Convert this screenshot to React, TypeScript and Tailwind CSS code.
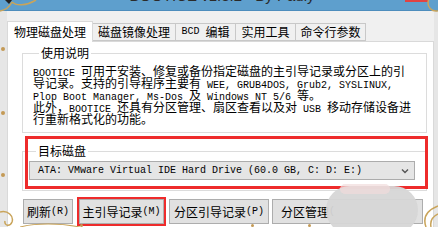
import React from "react";

const mono = "font-['Liberation_Mono','Courier_New',monospace] text-[10px] leading-[12px]";
const cjk = "font-['Noto_Sans_CJK_SC','Noto_Sans',sans-serif]";

function L({ children }: { children: React.ReactNode }) {
  return <span className={mono}>{children}</span>;
}

function Line({ children }: { children: React.ReactNode }) {
  return <div className="h-[12px] whitespace-nowrap leading-[12px]">{children}</div>;
}

function Btn({ children, w }: { children: React.ReactNode; w: string }) {
  return (
    <div className={`flex h-[25px] ${w} items-center justify-center border border-[#adadad] bg-[#e1e1e1] text-[12px] leading-[14px] text-black`}>
      {children}
    </div>
  );
}

const tab = "flex h-[18px] items-center justify-center border border-l-0 border-[#c8c8c8] bg-[#f0f0f0] text-[12px] leading-[14px] text-black";

export default function App() {
  return (
    <div className={`relative flex h-[227px] w-[438px] flex-col overflow-hidden bg-[#ececec] ${cjk}`}>
      {/* title bar */}
      <div className="relative flex h-[11px] shrink-0 justify-center overflow-hidden border-b border-[#4d8dbd] bg-[#5e9fcd]">
        <span className="-mt-[12px] ml-[6px] font-['Liberation_Sans',Arial,sans-serif] text-[15px] leading-[15px] text-[#2a2a2a]">
          BOOTICE v1.3.2 - By Pauly
        </span>
        <div className="absolute left-[405px] top-0 h-[2px] w-[23px] bg-[#e04343]" />
      </div>

      <div className="flex flex-1">
        <div className="w-[7px] shrink-0 bg-[#e6e6e6]" />
        <div className="flex flex-1 flex-col bg-[#f0f0f0] pt-[9px]">
          {/* tabs */}
          <div className="relative z-10 flex h-[21px] items-end">
            <div className="-mb-px flex h-[21px] w-[86px] items-center justify-center border border-b-0 border-[#d9d9d9] bg-white text-[12px] leading-[14px] text-black">
              物理磁盘处理
            </div>
            <div className={`${tab} w-[83px]`}>磁盘镜像处理</div>
            <div className={`${tab} w-[60px]`}>
              <L>BCD&nbsp;</L>编辑
            </div>
            <div className={`${tab} w-[60px]`}>实用工具</div>
            <div className={`${tab} w-[70px]`}>命令行参数</div>
          </div>

          {/* panel */}
          <div className="flex h-[200px] flex-col border border-[#d9d9d9] bg-white pl-[14px] pr-[6px]">
            <fieldset className="mt-[4px] border border-[#dcdcdc] pb-[7px] pl-[10px] pt-[5px]">
              <legend className="ml-[6px] px-[2px] text-[12px] leading-[14px] text-black">使用说明</legend>
              <div className="text-[12px] leading-[12px] text-black">
                <Line><L>BOOTICE </L>可用于安装、修复或备份指定磁盘的主引导记录或分区上的引</Line>
                <Line>导记录。支持的引导程序主要有<L> WEE, GRUB4DOS, Grub2, SYSLINUX,</L></Line>
                <Line><L>Plop Boot Manager, Ms-Dos </L>及<L> Windows NT 5/6 </L>等。</Line>
                <Line>此外，<L>BOOTICE </L>还具有分区管理、扇区查看以及对<L> USB </L>移动存储设备进</Line>
                <Line>行重新格式化的功能。</Line>
              </div>
            </fieldset>

            <fieldset className="mt-[11px] border border-[#dcdcdc] pb-[10px] pl-[6px] pr-[11px] pt-[3px]">
              <legend className="ml-[7px] px-[2px] text-[12px] leading-[14px] text-black">目标磁盘</legend>
              <div className="flex h-[19px] items-center border border-[#acacac] bg-[#e5e5e5] pl-[8px] pr-[5px]">
                <span className={`${mono} flex-1 whitespace-nowrap text-black`}>ATA: VMware Virtual IDE Hard Drive (60.0 GB, C: D: E:)</span>
                <svg width="8" height="6" viewBox="0 0 8 6">
                  <path d="M1 1.5 L4 4.5 L7 1.5" fill="none" stroke="#555" strokeWidth="1.4" />
                </svg>
              </div>
            </fieldset>

            <div className="mt-[6px] flex items-center">
              <div className="ml-[1px]">
                <Btn w="w-[50px]">刷新<L>(R)</L></Btn>
              </div>
              <div className="ml-[4px] border-2 border-[#ee2b2b]">
                <Btn w="w-[85px]">主引导记录<L>(M)</L></Btn>
              </div>
              <div className="ml-[3px]">
                <Btn w="w-[100px]">分区引导记录<L>(P)</L></Btn>
              </div>
              <div className="ml-[3px]">
                <div className="flex h-[25px] w-[151px] items-center border border-[#adadad] bg-[#e1e1e1] pl-[8px] text-[12px] leading-[14px] text-black">
                  分区管理<L>(</L>
                </div>
              </div>
            </div>
          </div>
        </div>
        <div className="w-[4px] shrink-0 bg-[#e6e6e6]" />
      </div>

      {/* red annotation around target disk */}
      <div className="absolute left-[25px] top-[136px] h-[53px] w-[403px] border-[3px] border-[#ee2b2b]" />

      {/* blurred mosaic */}
      <div className="absolute left-[326px] top-[186px] h-[48px] w-[92px] rounded-full bg-[#d6d6d6] opacity-95" />
      <div className="absolute left-[340px] top-[184px] h-[10px] w-[50px] rounded-full bg-[#f1dcdc] opacity-70" />

      {/* decorations */}
      <svg className="absolute left-0 top-0" width="40" height="16" viewBox="0 0 40 16">
        <path d="M0 11 C6 10 10 6 12 2 M12 2 C16 6 26 6 36 0" fill="none" stroke="#c9a45a" strokeWidth="1.5" />
        <path d="M5 0 L12 0 L9 4 Z" fill="#222" />
      </svg>
      <svg className="absolute left-[424px] top-0" width="14" height="12" viewBox="0 0 14 12">
        <circle cx="12" cy="3" r="8" fill="none" stroke="#c9a45a" strokeWidth="1.5" />
      </svg>
      <div className="absolute left-[1px] top-[47px] h-[4px] w-[4px] rounded-full bg-[#c49a55]" />
      <div className="absolute left-[1px] top-[111px] h-[4px] w-[4px] rounded-full bg-[#c49a55]" />
      <div className="absolute left-[1px] top-[173px] h-[4px] w-[4px] rounded-full bg-[#c49a55]" />
      <svg className="absolute left-0 top-[208px]" width="24" height="19" viewBox="0 0 24 19">
        <path d="M0 4 C8 2 14 8 12 14 C10 19 4 18 5 13" fill="none" stroke="#c9a45a" strokeWidth="1.5" />
      </svg>
      <svg className="absolute left-[20px] top-[222px]" width="60" height="5" viewBox="0 0 60 5">
        <path d="M0 5 C15 1 40 1 60 5" fill="none" stroke="#c9a45a" strokeWidth="1.2" />
      </svg>
      <svg className="absolute left-[418px] top-[204px]" width="20" height="23" viewBox="0 0 20 23">
        <path d="M20 2 C10 6 4 12 8 23 M20 10 C14 13 12 18 13 23" fill="none" stroke="#c9a45a" strokeWidth="1.5" />
      </svg>
      <div className="absolute left-[80px] top-[224px] h-[3px] w-[3px] rounded-full bg-[#c49a55]" />
      <div className="absolute left-[251px] top-[224px] h-[3px] w-[3px] rounded-full bg-[#c49a55]" />
      <div className="absolute left-[308px] top-[224px] h-[3px] w-[3px] rounded-full bg-[#c49a55]" />
    </div>
  );
}
